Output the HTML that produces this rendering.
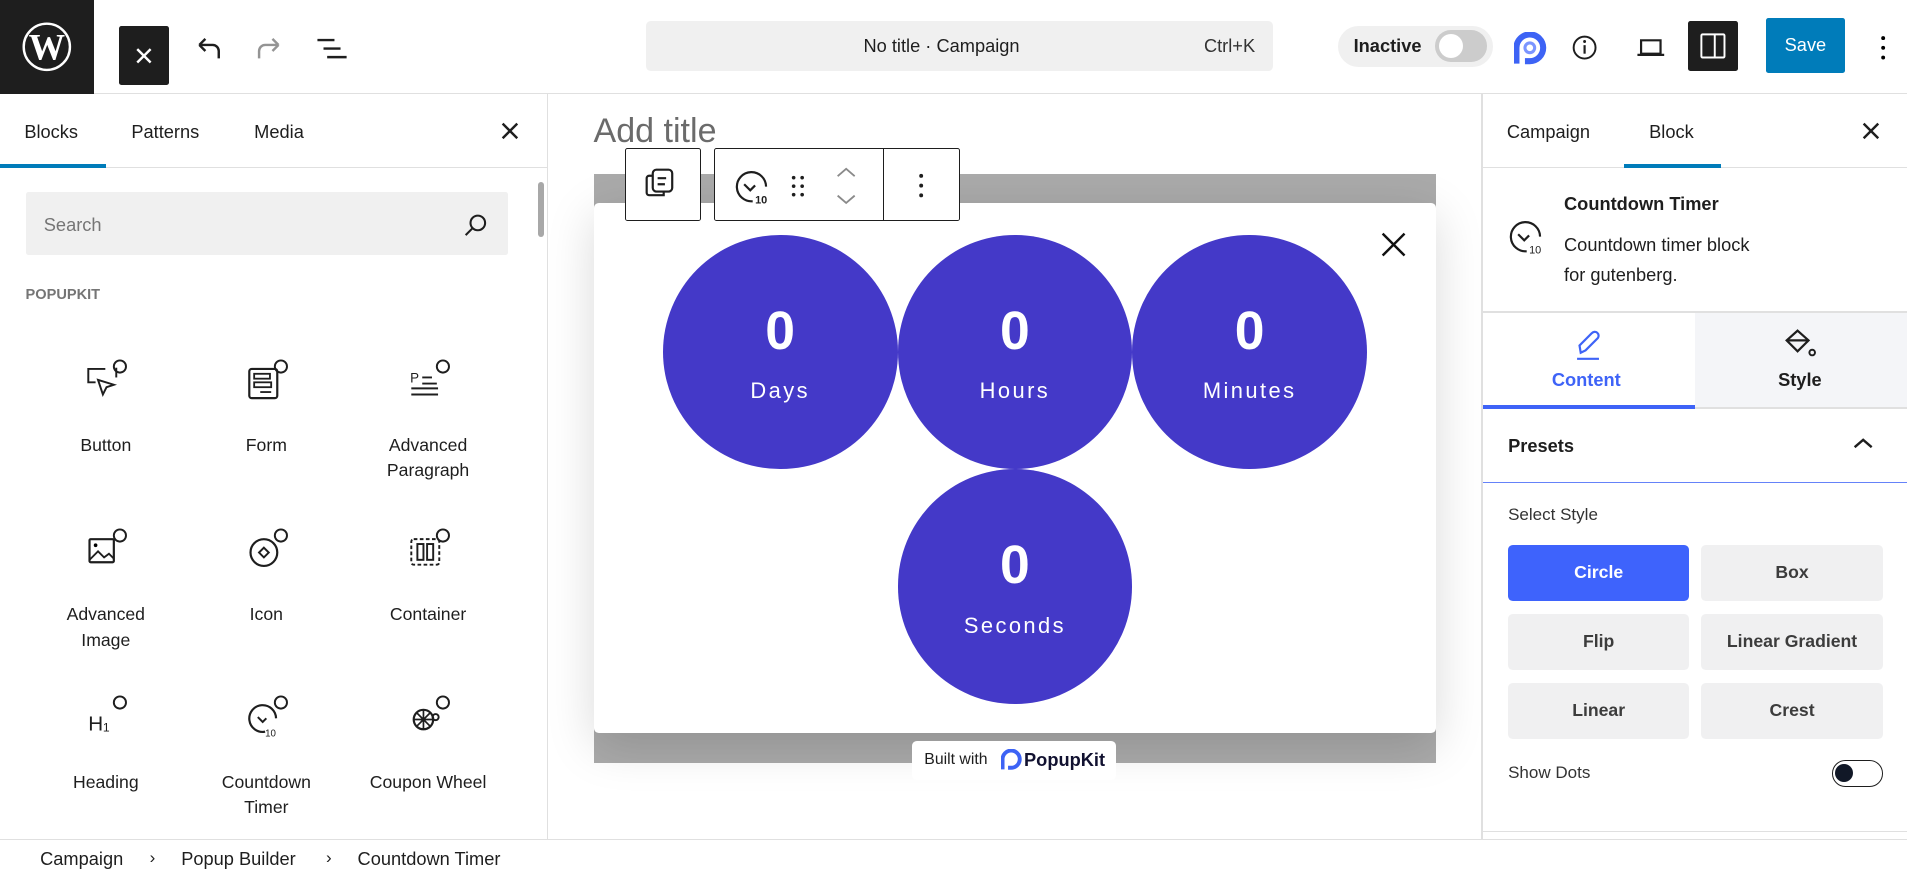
<!DOCTYPE html>
<html><head><meta charset="utf-8"><style>
*{box-sizing:border-box;margin:0;padding:0}
html,body{width:1907px;height:876px;overflow:hidden;background:#fff}
#r{position:relative;width:1568px;height:720px;zoom:1.21619;font-family:"Liberation Sans",sans-serif;color:#1e1e1e;font-size:15px}
.a{position:absolute}
svg{display:block}
.tab{position:absolute;top:77px;height:60px;line-height:62px;font-size:15px;color:#1e1e1e}
.blk{position:absolute;width:130px;text-align:center;font-size:14.5px;line-height:21px;color:#1e1e1e}
.blk svg{margin:0 auto 22px}
.circ{position:absolute;width:193px;height:193px;border-radius:50%;background:#4439c8;color:#fff;text-align:center}
.circ b{display:block;font-size:44px;font-weight:bold;margin-top:55px;line-height:50px}
.circ span{display:block;font-size:18px;letter-spacing:2px;margin-top:13px}
.btn{position:absolute;width:149px;height:46px;border-radius:4px;background:#f0f0f1;color:#3c3c3c;text-align:center;line-height:46px;font-size:14.5px;font-weight:bold}
</style></head><body><div id="r">
<!-- top bar -->
<div class="a" style="left:0;top:0;width:1568px;height:77px;border-bottom:1px solid #e0e0e0"></div>
<div class="a" style="left:0;top:0;width:77px;height:77px;background:#1e1e1e">
<svg width="77" height="77" viewBox="0 0 77 77"><circle cx="38.5" cy="38.5" r="19" fill="none" stroke="#fff" stroke-width="2"/><text x="38.5" y="49" text-anchor="middle" font-family="Liberation Serif" font-weight="bold" font-size="30" fill="#fff">W</text></svg></div>
<div class="a" style="left:98px;top:21px;width:41px;height:49px;background:#1e1e1e;border-radius:2px"><svg width="41" height="49"><path d="M15 19l11 11M26 19L15 30" stroke="#fff" stroke-width="2"/></svg></div>
<svg class="a" style="left:158px;top:28px" width="26" height="24"><path d="M6 9h11a5 5 0 015 5v6M6 9l5-5M6 9l5 5" fill="none" stroke="#1e1e1e" stroke-width="2"/></svg>
<svg class="a" style="left:208px;top:28px" width="26" height="24"><path d="M21 9H10a5 5 0 00-5 5v6M21 9l-5-5M21 9l-5 5" fill="none" stroke="#949494" stroke-width="2"/></svg>
<svg class="a" style="left:259px;top:28px" width="28" height="24"><path d="M2 5h14M7 12h14M10 19h16" stroke="#1e1e1e" stroke-width="2"/></svg>
<div class="a" style="left:531px;top:17px;width:516px;height:41px;background:#f0f0f0;border-radius:4px;font-size:15px;line-height:41px"><span class="a" style="left:179px">No title · Campaign</span><span class="a" style="right:15px;color:#333">Ctrl+K</span></div>
<div class="a" style="left:1100px;top:21px;width:128px;height:34px;background:#f0f0f0;border-radius:17px"><span class="a" style="left:13px;top:8px;font-weight:bold;font-size:15px">Inactive</span><div class="a" style="left:80px;top:4px;width:43px;height:26px;border-radius:13px;background:#ccc"><div class="a" style="left:3px;top:3px;width:20px;height:20px;border-radius:50%;background:#fff"></div></div></div>
<svg class="a" style="left:1245px;top:26px" width="28" height="28" viewBox="0 0 28 28"><path d="M2 26V13A11 11 0 1113 24H9" fill="none" stroke="#3d63f5" stroke-width="5"/><circle cx="13" cy="13" r="4" fill="none" stroke="#7b95ff" stroke-width="2.5"/></svg>
<svg class="a" style="left:1291px;top:27px" width="24" height="24"><circle cx="12" cy="12" r="9" fill="none" stroke="#1e1e1e" stroke-width="1.6"/><path d="M12 10v7" stroke="#1e1e1e" stroke-width="1.8"/><circle cx="12" cy="7" r="1.2" fill="#1e1e1e"/></svg>
<svg class="a" style="left:1344px;top:27px" width="26" height="24"><path d="M5 6h16v11H5zM2 18h22" fill="none" stroke="#1e1e1e" stroke-width="1.8"/></svg>
<div class="a" style="left:1388px;top:17px;width:41px;height:41px;background:#1e1e1e;border-radius:2px"><svg width="41" height="41"><rect x="11" y="11" width="19" height="19" rx="1" fill="none" stroke="#fff" stroke-width="1.6"/><path d="M22 11v19" stroke="#fff" stroke-width="1.6"/></svg></div>
<div class="a" style="left:1452px;top:15px;width:65px;height:45px;background:#007cba;border-radius:2px;color:#fff;text-align:center;line-height:45px;font-size:15px">Save</div>
<svg class="a" style="left:1538px;top:26px" width="20" height="26"><circle cx="10" cy="5" r="1.6"/><circle cx="10" cy="13" r="1.6"/><circle cx="10" cy="21" r="1.6"/></svg>

<!-- left panel -->
<div class="a" style="left:450px;top:77px;width:1px;height:613px;background:#e0e0e0"></div>
<div class="a" style="left:0;top:137px;width:450px;height:1px;background:#e0e0e0"></div>
<div class="tab" style="left:20px">Blocks</div>
<div class="a" style="left:0;top:135px;width:87px;height:3px;background:#007cba"></div>
<div class="tab" style="left:108px">Patterns</div>
<div class="tab" style="left:209px">Media</div>
<svg class="a" style="left:410px;top:99px" width="18" height="18"><path d="M3 3l12 12M15 3L3 15" stroke="#1e1e1e" stroke-width="2"/></svg>
<div class="a" style="left:440px;top:140px;width:9px;height:548px"><div class="a" style="left:2px;top:10px;width:5px;height:45px;background:#a8a8a8;border-radius:3px"></div></div>
<div class="a" style="left:21px;top:158px;width:397px;height:52px;background:#f0f0f0;border-radius:2px"><span class="a" style="left:15px;top:18px;color:#757575;font-size:15px">Search</span><svg class="a" style="left:359px;top:16px" width="22" height="22"><circle cx="13" cy="9" r="6" fill="none" stroke="#1e1e1e" stroke-width="1.7"/><path d="M9 13l-6 6" stroke="#1e1e1e" stroke-width="1.7"/></svg></div>
<div class="a" style="left:21px;top:236px;font-size:12px;font-weight:bold;color:#757575">POPUPKIT</div>

<div class="blk" style="left:22px;top:294px"><svg width="40" height="40" viewBox="0 0 40 40"><path d="M20 9H6v11h6" fill="none" stroke="#1e1e1e" stroke-width="1.6"/><path d="M14 18l4 12 3-6 6-2z" fill="none" stroke="#1e1e1e" stroke-width="1.6"/><circle cx="32" cy="7" r="5" fill="none" stroke="#1e1e1e" stroke-width="1.6"/><path d="M29 16V8" stroke="#1e1e1e" stroke-width="1.6"/></svg>Button</div>
<div class="blk" style="left:154px;top:294px"><svg width="40" height="40" viewBox="0 0 40 40"><rect x="6" y="9" width="23" height="24" rx="2" fill="none" stroke="#1e1e1e" stroke-width="1.8"/><rect x="10" y="13" width="13" height="4" fill="none" stroke="#1e1e1e" stroke-width="1.5"/><rect x="10" y="20" width="14" height="4" fill="none" stroke="#1e1e1e" stroke-width="1.5"/><path d="M15 28h9" stroke="#1e1e1e" stroke-width="1.5"/><circle cx="32" cy="7" r="5" fill="none" stroke="#1e1e1e" stroke-width="1.6"/></svg>Form</div>
<div class="blk" style="left:287px;top:294px"><svg width="40" height="40" viewBox="0 0 40 40"><text x="5" y="20" font-size="11" font-family="Liberation Sans" fill="#1e1e1e">P</text><path d="M15 16h8M15 21h12M6 25h22M6 30h22" stroke="#1e1e1e" stroke-width="1.6"/><circle cx="32" cy="7" r="5" fill="none" stroke="#1e1e1e" stroke-width="1.6"/></svg>Advanced<br>Paragraph</div>
<div class="blk" style="left:22px;top:433px"><svg width="40" height="40" viewBox="0 0 40 40"><rect x="7" y="10" width="20" height="19" rx="1" fill="none" stroke="#1e1e1e" stroke-width="1.8"/><circle cx="12" cy="15" r="1.5"/><path d="M7 27l7-7 5 5 4-3 4 4" fill="none" stroke="#1e1e1e" stroke-width="1.5"/><circle cx="32" cy="7" r="5" fill="none" stroke="#1e1e1e" stroke-width="1.6"/></svg>Advanced<br>Image</div>
<div class="blk" style="left:154px;top:433px"><svg width="40" height="40" viewBox="0 0 40 40"><circle cx="18" cy="21" r="11" fill="none" stroke="#1e1e1e" stroke-width="1.8"/><path d="M18 17l4 4-4 4-4-4z" fill="none" stroke="#1e1e1e" stroke-width="1.6"/><circle cx="32" cy="7" r="5" fill="none" stroke="#1e1e1e" stroke-width="1.6"/></svg>Icon</div>
<div class="blk" style="left:287px;top:433px"><svg width="40" height="40" viewBox="0 0 40 40"><rect x="6" y="10" width="23" height="21" rx="2" fill="none" stroke="#1e1e1e" stroke-width="1.6" stroke-dasharray="3 2"/><rect x="11" y="14" width="5" height="13" fill="none" stroke="#1e1e1e" stroke-width="1.6"/><rect x="19" y="14" width="5" height="13" fill="none" stroke="#1e1e1e" stroke-width="1.6"/><circle cx="32" cy="7" r="5" fill="none" stroke="#1e1e1e" stroke-width="1.6"/></svg>Container</div>
<div class="blk" style="left:22px;top:571px"><svg width="40" height="40" viewBox="0 0 40 40"><text x="6" y="30" font-size="17" font-family="Liberation Sans" fill="#1e1e1e">H</text><text x="18" y="31" font-size="10" font-family="Liberation Sans" fill="#1e1e1e">1</text><circle cx="32" cy="7" r="5" fill="none" stroke="#1e1e1e" stroke-width="1.6"/></svg>Heading</div>
<div class="blk" style="left:154px;top:571px"><svg width="40" height="40" viewBox="0 0 40 40"><path d="M28 20A11 11 0 1 0 19 31" fill="none" stroke="#1e1e1e" stroke-width="1.8"/><path d="M13 19l4 4 3-3" fill="none" stroke="#1e1e1e" stroke-width="1.6"/><text x="19" y="35" font-size="8" font-family="Liberation Sans" fill="#1e1e1e">10</text><circle cx="32" cy="7" r="5" fill="none" stroke="#1e1e1e" stroke-width="1.6"/></svg>Countdown<br>Timer</div>
<div class="blk" style="left:287px;top:571px"><svg width="40" height="40" viewBox="0 0 40 40"><circle cx="16" cy="21" r="8" fill="none" stroke="#1e1e1e" stroke-width="1.8"/><path d="M10 15l12 12M22 15L10 27M16 13v16M8 21h16" stroke="#1e1e1e" stroke-width="1.4"/><circle cx="26" cy="19" r="2.5" fill="none" stroke="#1e1e1e" stroke-width="1.6"/><circle cx="32" cy="7" r="5" fill="none" stroke="#1e1e1e" stroke-width="1.6"/></svg>Coupon Wheel</div>

<!-- canvas -->
<div class="a" style="left:488px;top:92px;font-size:28px;color:#6b6b6b">Add title</div>
<div class="a" style="left:488px;top:143px;width:693px;height:484px;background:#aaa"></div>
<div class="a" style="left:488px;top:167px;width:693px;height:436px;background:#fff;border-radius:4px;box-shadow:0 10px 40px rgba(0,0,0,.15)"></div>
<svg class="a" style="left:1134px;top:189px" width="24" height="24"><path d="M3 3l18 18M21 3L3 21" stroke="#111" stroke-width="2"/></svg>
<div class="circ" style="left:545px;top:193px"><b>0</b><span>Days</span></div>
<div class="circ" style="left:738px;top:193px"><b>0</b><span>Hours</span></div>
<div class="circ" style="left:931px;top:193px"><b>0</b><span>Minutes</span></div>
<div class="circ" style="left:738px;top:386px"><b>0</b><span>Seconds</span></div>
<div class="a" style="left:514px;top:122px;width:62px;height:60px;background:#fff;border:1px solid #1e1e1e;border-radius:2px"><svg width="60" height="58"><rect x="22" y="17" width="16" height="18" rx="3" fill="none" stroke="#1e1e1e" stroke-width="1.8"/><path d="M22 22h-3a2 2 0 00-2 2v12a2 2 0 002 2h12v-3M26 24h7M26 29h6" fill="none" stroke="#1e1e1e" stroke-width="1.8"/></svg></div>
<div class="a" style="left:587px;top:122px;width:202px;height:60px;background:#fff;border:1px solid #1e1e1e;border-radius:2px">
<svg class="a" style="left:14px;top:14px" width="34" height="32" viewBox="0 0 34 32"><path d="M28 17A12 12 0 1 0 17 29" fill="none" stroke="#1e1e1e" stroke-width="1.8"/><path d="M10 15l5 5 4-4" fill="none" stroke="#1e1e1e" stroke-width="1.8"/><text x="19" y="31" font-size="9" font-weight="bold" font-family="Liberation Sans" fill="#1e1e1e">10</text></svg>
<svg class="a" style="left:62px;top:20px" width="14" height="20"><g fill="#1e1e1e"><circle cx="3" cy="3" r="1.5"/><circle cx="10" cy="3" r="1.5"/><circle cx="3" cy="10" r="1.5"/><circle cx="10" cy="10" r="1.5"/><circle cx="3" cy="17" r="1.5"/><circle cx="10" cy="17" r="1.5"/></g></svg>
<svg class="a" style="left:98px;top:12px" width="20" height="36"><path d="M3 10l7-6 7 6M3 26l7 6 7-6" fill="none" stroke="#8a8a8a" stroke-width="1.5"/></svg>
<div class="a" style="left:138px;top:0;width:1px;height:58px;background:#1e1e1e"></div>
<svg class="a" style="left:160px;top:18px" width="20" height="24"><g fill="#1e1e1e"><circle cx="10" cy="4" r="1.6"/><circle cx="10" cy="12" r="1.6"/><circle cx="10" cy="20" r="1.6"/></g></svg>
</div>
<div class="a" style="left:750px;top:609px;width:168px;height:32px;background:#fff;border-radius:4px;font-size:13px;line-height:32px"><span class="a" style="left:10px">Built with</span><svg class="a" style="left:73px;top:7px" width="18" height="18" viewBox="0 0 28 28"><path d="M2 26V13A11 11 0 1113 24H9" fill="none" stroke="#3d63f5" stroke-width="5"/></svg><span class="a" style="left:92px;font-weight:bold;font-size:15px;color:#111130">PopupKit</span></div>

<!-- right panel -->
<div class="a" style="left:1218px;top:77px;width:1px;height:613px;background:#e0e0e0"></div>
<div class="a" style="left:1219px;top:137px;width:349px;height:1px;background:#e0e0e0"></div>
<div class="tab" style="left:1239px">Campaign</div>
<div class="tab" style="left:1356px">Block</div>
<div class="a" style="left:1335px;top:135px;width:80px;height:3px;background:#007cba"></div>
<svg class="a" style="left:1529px;top:99px" width="18" height="18"><path d="M3 3l12 12M15 3L3 15" stroke="#1e1e1e" stroke-width="2"/></svg>
<svg class="a" style="left:1238px;top:178px" width="34" height="32" viewBox="0 0 34 32"><path d="M28 17A12 12 0 1 0 17 29" fill="none" stroke="#1e1e1e" stroke-width="1.8"/><path d="M10 15l5 5 4-4" fill="none" stroke="#1e1e1e" stroke-width="1.8"/><text x="19" y="31" font-size="9" font-family="Liberation Sans" fill="#1e1e1e">10</text></svg>
<div class="a" style="left:1286px;top:159px;font-weight:bold;font-size:15px">Countdown Timer</div>
<div class="a" style="left:1286px;top:189px;font-size:15px;line-height:25px">Countdown timer block<br>for gutenberg.</div>
<div class="a" style="left:1219px;top:256px;width:349px;height:1px;background:#e0e0e0"></div>
<div class="a" style="left:1394px;top:257px;width:174px;height:79px;background:#f4f5f8;border-bottom:2px solid #e0e0e0"></div>
<div class="a" style="left:1219px;top:333px;width:175px;height:3px;background:#3e63f7"></div>
<svg class="a" style="left:1292px;top:268px" width="28" height="30"><path d="M8 22l-1-6L17 6a3 3 0 015 4L12 20z" fill="none" stroke="#3e63f7" stroke-width="1.8"/><path d="M5 27h18" stroke="#3e63f7" stroke-width="1.8"/></svg>
<div class="a" style="left:1276px;top:303px;color:#3e63f7;font-weight:bold;font-size:15px">Content</div>
<svg class="a" style="left:1466px;top:269px" width="30" height="28"><path d="M12 3l9 8-9 9-9-9z" fill="none" stroke="#1e1e1e" stroke-width="1.8"/><path d="M3 11h18" stroke="#1e1e1e" stroke-width="1.8"/><circle cx="24" cy="21" r="2.3" fill="none" stroke="#1e1e1e" stroke-width="1.6"/></svg>
<div class="a" style="left:1462px;top:303px;font-weight:bold;font-size:15px">Style</div>
<div class="a" style="left:1240px;top:358px;font-weight:bold;font-size:15px">Presets</div>
<svg class="a" style="left:1522px;top:358px" width="20" height="14"><path d="M3 10l7-6 7 6" fill="none" stroke="#1e1e1e" stroke-width="2"/></svg>
<div class="a" style="left:1219px;top:396px;width:349px;height:1px;background:#3e63f7;opacity:.8"></div>
<div class="a" style="left:1240px;top:415px;font-size:14px;color:#333">Select Style</div>
<div class="btn" style="left:1240px;top:448px;background:#3e63fc;color:#fff">Circle</div>
<div class="btn" style="left:1399px;top:448px">Box</div>
<div class="btn" style="left:1240px;top:505px">Flip</div>
<div class="btn" style="left:1399px;top:505px">Linear Gradient</div>
<div class="btn" style="left:1240px;top:562px">Linear</div>
<div class="btn" style="left:1399px;top:562px">Crest</div>
<div class="a" style="left:1240px;top:627px;font-size:14px;color:#333">Show Dots</div>
<div class="a" style="left:1506px;top:625px;width:42px;height:22px;border:1.5px solid #1e1e1e;border-radius:11px"><div class="a" style="left:2px;top:2px;width:15px;height:15px;border-radius:50%;background:#111827"></div></div>
<div class="a" style="left:1219px;top:683px;width:349px;height:1px;background:#e0e0e0"></div>

<!-- footer -->
<div class="a" style="left:0;top:690px;width:1568px;height:1px;background:#e0e0e0"></div>
<div class="a" style="left:33px;top:697px;font-size:15px">Campaign</div>
<div class="a" style="left:123px;top:697px;font-size:14px">›</div>
<div class="a" style="left:149px;top:697px;font-size:15px">Popup Builder</div>
<div class="a" style="left:268px;top:697px;font-size:14px">›</div>
<div class="a" style="left:294px;top:697px;font-size:15px">Countdown Timer</div>
</div></body></html>
